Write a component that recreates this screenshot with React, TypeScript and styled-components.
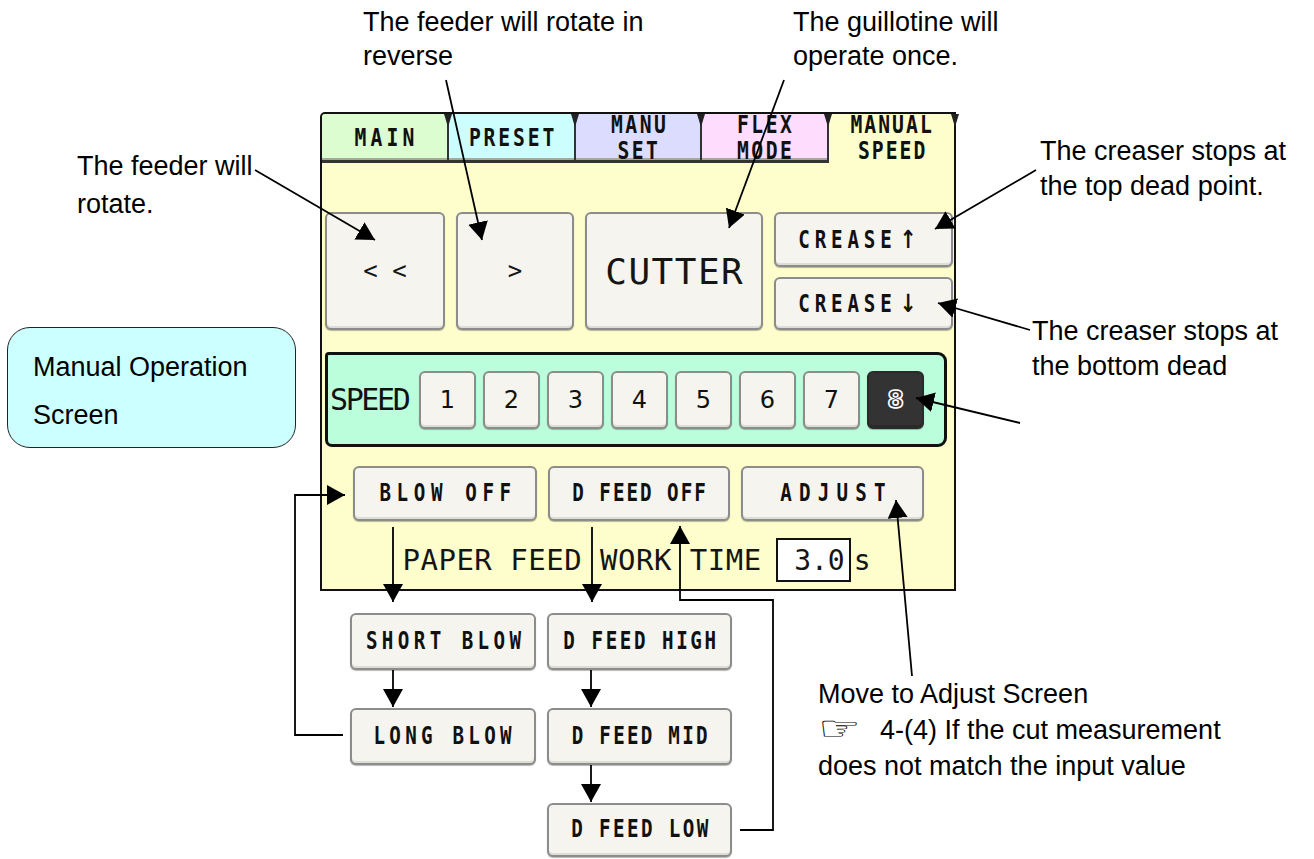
import React from 'react';
import styled, {createGlobalStyle} from 'styled-components';

const GlobalStyle = createGlobalStyle`
  html, body {
    margin: 0;
    padding: 0;
    background: #ffffff;
  }
  body {
    font-family: "Liberation Sans", Arial, sans-serif;
  }
`;

const tabs = [
  {lines: ['MAIN'], bg: '#dcfdd0', sp: 5},
  {lines: ['PRESET'], bg: '#ccfefe', sp: 3.5},
  {lines: ['MANU', 'SET'], bg: '#dcdcfe', sp: 3},
  {lines: ['FLEX', 'MODE'], bg: '#fedcfe', sp: 3},
  {lines: ['MANUAL', 'SPEED'], bg: '#fefecc', sp: 2.5, active: true},
];

const speeds = [1, 2, 3, 4, 5, 6, 7, 8];

const Canvas = styled.div`
  position: relative;
  width: 1314px;
  height: 859px;
  overflow: hidden;
  background: #ffffff;
`;

const Screen = styled.div`
  display: flex;
  flex-direction: column;
  padding: 112px 0 0 320px;
`;

const Panel = styled.div`
  box-sizing: border-box;
  width: 636px;
  height: 479px;
  display: flex;
  flex-direction: column;
  background: #fefecc;
  border: 2px solid #111;
  border-top-left-radius: 5px;
`;

const TabRow = styled.div`
  display: flex;
  height: 49px;
`;

const Tab = styled.div<{$bg: string; $active?: boolean}>`
  position: relative;
  flex: 1;
  box-sizing: border-box;
  display: flex;
  flex-direction: column;
  align-items: center;
  justify-content: center;
  background: ${p => p.$bg};
  border-left: 2px solid #333;
  border-bottom: ${p => (p.$active ? '0' : '3px solid #333')};
  box-shadow: ${p => (p.$active ? 'none' : 'inset 0 -2px 0 #a8a898')};
  padding-top: ${p => (p.$active ? '0' : '3px')};
  &:first-child {
    border-left: 0;
    border-top-left-radius: 4px;
  }
  &::after {
    content: '';
    position: absolute;
    top: 0;
    right: -5px;
    border-left: 4px solid transparent;
    border-right: 4px solid transparent;
    border-top: 13px solid #222;
    z-index: 2;
  }
`;

const Pix = styled.span<{$size?: number; $sp?: number; $sx?: number; $pr?: number}>`
  display: inline-block;
  white-space: nowrap;
  font-family: "DejaVu Sans Mono", monospace;
  font-weight: bold;
  font-size: ${p => p.$size ?? 24}px;
  line-height: 1.08;
  letter-spacing: ${p => p.$sp ?? 0}px;
  padding-left: ${p => p.$sp ?? 0}px;
  padding-right: ${p => p.$pr ?? 0}px;
  transform: scaleX(${p => p.$sx ?? 0.8});
  color: #111;
`;

const Arrow = styled.span`
  margin-left: 4px;
  font-family: "DejaVu Sans", sans-serif;
  font-weight: bold;
  font-size: 25px;
  letter-spacing: 0;
`;

const Body = styled.div`
  flex: 1;
  display: flex;
  flex-direction: column;
  padding: 49px 1px 0 3px;
`;

const TopRow = styled.div`
  display: grid;
  grid-template-columns: 120px 118px 178px 179px;
  column-gap: 11px;
  height: 118px;
`;

const Key = styled.div<{$dark?: boolean}>`
  box-sizing: border-box;
  min-width: 0;
  display: flex;
  align-items: center;
  justify-content: center;
  overflow: visible;
  background: ${p => (p.$dark ? '#333333' : '#f5f4ee')};
  border: 2px solid ${p => (p.$dark ? '#2a2a2a' : '#8c8c8c')};
  border-radius: 6px;
  box-shadow: 0 1px 1px rgba(0, 0, 0, 0.28), inset 0 -2px 0 ${p => (p.$dark ? '#2a2a2a' : '#dddcd5')};
`;

const CreaseCol = styled.div`
  display: grid;
  grid-template-rows: 55px 53px;
  row-gap: 10px;
`;

const Thin = styled.span<{$size: number; $sp?: number}>`
  font-family: "DejaVu Sans Mono", monospace;
  font-size: ${p => p.$size}px;
  letter-spacing: ${p => p.$sp ?? 0}px;
  padding-left: ${p => p.$sp ?? 0}px;
  color: #151515;
  white-space: pre;
`;

const SpeedGroup = styled.div`
  box-sizing: border-box;
  margin-top: 22px;
  width: 622px;
  height: 95px;
  display: flex;
  align-items: center;
  gap: 7px;
  padding-left: 2px;
  background: #bbfedb;
  border: 3px solid #111;
  border-radius: 4px 9px 9px 7px;
`;

const SpeedLabel = styled.span`
  width: 82px;
  font-family: "DejaVu Sans Mono", monospace;
  font-size: 30px;
  letter-spacing: -2.4px;
  color: #111;
`;

const SpeedKey = styled(Key)`
  width: 57px;
  height: 58px;
  font-family: "DejaVu Sans", sans-serif;
  font-size: 24px;
  font-weight: ${p => (p.$dark ? 'bold' : 'normal')};
  color: ${p => (p.$dark ? '#333' : '#111')};
  -webkit-text-stroke: ${p => (p.$dark ? '1.6px #fff' : '0')};
`;

const OptionRow = styled.div`
  margin-top: 19px;
  padding-left: 28px;
  display: grid;
  grid-template-columns: 184px 182px 183px;
  column-gap: 11px;
  height: 55px;
`;

const TimeRow = styled.div`
  margin-top: 17px;
  padding-left: 77px;
  height: 44px;
  display: flex;
  align-items: center;
`;

const TimeBox = styled.div`
  box-sizing: border-box;
  width: 75px;
  height: 44px;
  margin: 0 3px 0 14px;
  display: flex;
  align-items: center;
  justify-content: flex-end;
  padding-right: 4px;
  background: #ffffff;
  border: 2px solid #111;
`;

const FlowGrid = styled.div`
  margin: 22px 0 0 30px;
  display: grid;
  grid-template-columns: 186px 185px;
  grid-template-rows: 57px 57px 54px;
  column-gap: 11px;
  row-gap: 38px;
`;

const Slot = styled.div<{$col: number; $row: number}>`
  grid-column: ${p => p.$col};
  grid-row: ${p => p.$row};
  min-width: 0;
  display: grid;
`;

const Note = styled.div<{$x: number; $y: number; $lh?: number}>`
  position: absolute;
  left: ${p => p.$x}px;
  top: ${p => p.$y}px;
  font-family: "Liberation Sans", Arial, sans-serif;
  font-size: 27px;
  line-height: ${p => p.$lh ?? 35}px;
  color: #000;
  white-space: nowrap;
`;

const Hand = styled.span`
  display: inline-block;
  width: 62px;
  font-family: "DejaVu Sans", sans-serif;
  font-size: 27px;
  transform: scale(1.75, 1.25);
  transform-origin: 0 60%;
`;

const Callout = styled.div`
  position: absolute;
  left: 7px;
  top: 327px;
  box-sizing: border-box;
  width: 289px;
  height: 121px;
  padding: 15px 0 0 25px;
  background: #ccffff;
  border: 1.5px solid #222;
  border-radius: 23px;
  font-family: "Liberation Sans", Arial, sans-serif;
  font-size: 27px;
  line-height: 48px;
  color: #000;
`;

const Overlay = styled.svg`
  position: absolute;
  left: 0;
  top: 0;
  pointer-events: none;
`;

const arrows = [
  'M255 170 L375 240',
  'M446 80 L482 240',
  'M784 80 L729 228',
  'M1036 170 L935 229',
  'M1030 330 L938 303',
  'M1020 423 L916 398',
  'M912 676 L896 500',
  'M393 527 L393 602',
  'M592 527 L592 602',
  'M393 670 L393 707',
  'M591 670 L591 707',
  'M591 765 L591 802',
  'M343 735 H295 V495 H345',
  'M740 830 H773 V600 H680 V526',
];

type BtnProps = {text: string; sp: number; arrow?: string; pr?: number};

const Btn = ({text, sp, arrow, pr}: BtnProps) => (
  <Key>
    <Pix $sp={sp} $pr={pr}>
      {text}
      {arrow && <Arrow>{arrow}</Arrow>}
    </Pix>
  </Key>
);

export default function App() {
  return (
    <Canvas>
      <GlobalStyle />
      <Screen>
        <Panel>
          <TabRow>
            {tabs.map(t => (
              <Tab key={t.lines.join()} $bg={t.bg} $active={t.active}>
                {t.lines.map(l => (
                  <Pix key={l} $sp={t.sp} $size={24} $sx={0.82}>
                    {l}
                  </Pix>
                ))}
              </Tab>
            ))}
          </TabRow>
          <Body>
            <TopRow>
              <Key>
                <Thin $size={24}>{'< <'}</Thin>
              </Key>
              <Key>
                <Thin $size={24}>{'>'}</Thin>
              </Key>
              <Key>
                <Thin $size={36} $sp={1.5}>
                  CUTTER
                </Thin>
              </Key>
              <CreaseCol>
                <Btn text="CREASE" arrow="↑" sp={6} pr={22} />
                <Btn text="CREASE" arrow="↓" sp={6} pr={22} />
              </CreaseCol>
            </TopRow>
            <SpeedGroup>
              <SpeedLabel>SPEED</SpeedLabel>
              {speeds.map(n => (
                <SpeedKey key={n} $dark={n === 8}>
                  {n}
                </SpeedKey>
              ))}
            </SpeedGroup>
            <OptionRow>
              <Btn text="BLOW OFF" sp={7} />
              <Btn text="D FEED OFF" sp={2.5} />
              <Btn text="ADJUST" sp={9} />
            </OptionRow>
            <TimeRow>
              <Thin $size={29} $sp={0.5}>
                PAPER FEED WORK TIME
              </Thin>
              <TimeBox>
                <Thin $size={28}>3.0</Thin>
              </TimeBox>
              <Thin $size={28}>s</Thin>
            </TimeRow>
          </Body>
        </Panel>
        <FlowGrid>
          <Slot $col={1} $row={1}>
            <Btn text="SHORT BLOW" sp={5.5} />
          </Slot>
          <Slot $col={2} $row={1}>
            <Btn text="D FEED HIGH" sp={3.2} />
          </Slot>
          <Slot $col={1} $row={2}>
            <Btn text="LONG BLOW" sp={5.3} />
          </Slot>
          <Slot $col={2} $row={2}>
            <Btn text="D FEED MID" sp={2.8} />
          </Slot>
          <Slot $col={2} $row={3}>
            <Btn text="D FEED LOW" sp={3} />
          </Slot>
        </FlowGrid>
      </Screen>

      <Note $x={363} $y={5} $lh={34}>
        The feeder will rotate in
        <br />
        reverse
      </Note>
      <Note $x={793} $y={5} $lh={34}>
        The guillotine will
        <br />
        operate once.
      </Note>
      <Note $x={77} $y={147} $lh={38}>
        The feeder will
        <br />
        rotate.
      </Note>
      <Note $x={1040} $y={134}>
        The creaser stops at
        <br />
        the top dead point.
      </Note>
      <Note $x={1032} $y={314}>
        The creaser stops at
        <br />
        the bottom dead
      </Note>
      <Note $x={818} $y={676} $lh={36}>
        Move to Adjust Screen
        <br />
        <Hand>☞</Hand>4-(4) If the cut measurement
        <br />
        does not match the input value
      </Note>
      <Callout>
        Manual Operation
        <br />
        Screen
      </Callout>

      <Overlay width={1314} height={859} viewBox="0 0 1314 859">
        <defs>
          <marker
            id="head"
            markerUnits="userSpaceOnUse"
            markerWidth={20}
            markerHeight={20}
            refX={18}
            refY={10}
            orient="auto"
          >
            <path d="M0 0 L18 10 L0 20 Z" fill="#000" />
          </marker>
        </defs>
        {arrows.map(d => (
          <path
            key={d}
            d={d}
            fill="none"
            stroke="#000"
            strokeWidth={1.8}
            markerEnd="url(#head)"
          />
        ))}
      </Overlay>
    </Canvas>
  );
}
